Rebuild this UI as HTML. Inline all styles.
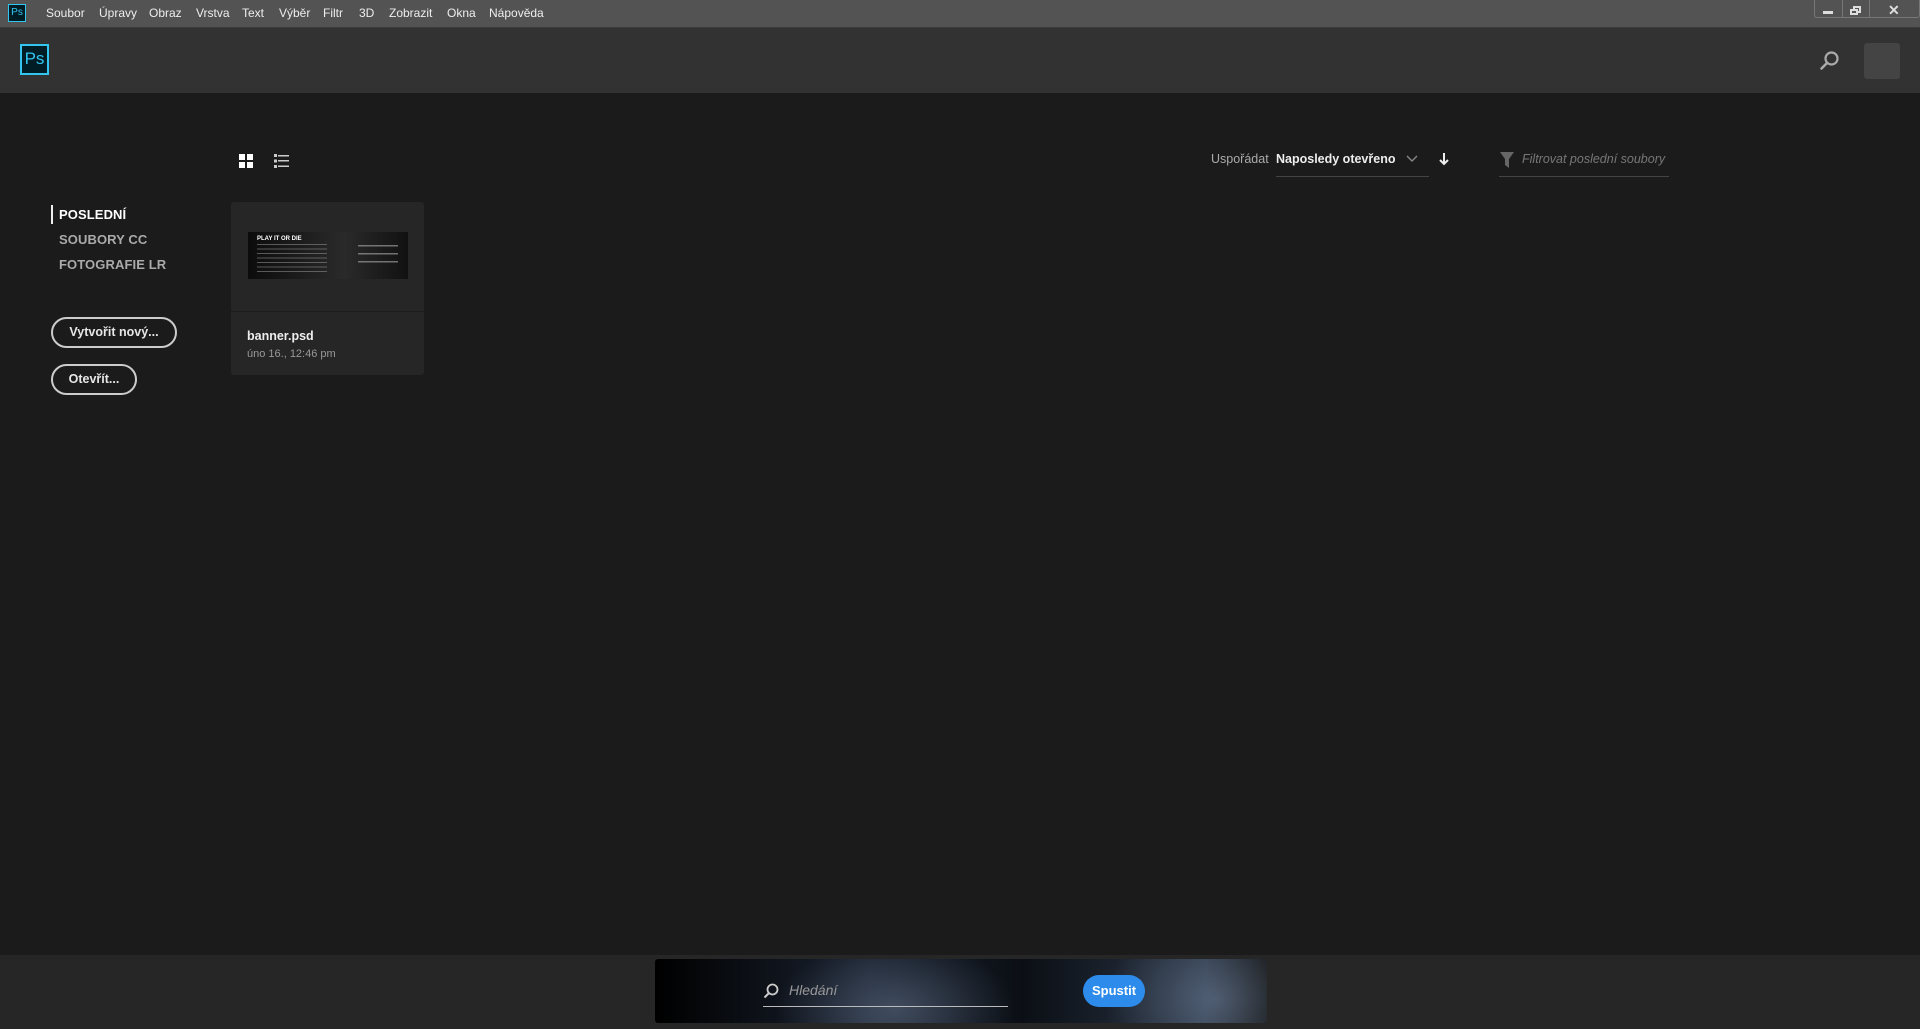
<!DOCTYPE html>
<html><head><meta charset="utf-8"><style>
*{margin:0;padding:0;box-sizing:border-box}
body{width:1920px;height:1029px;background:#1b1b1b;font-family:"Liberation Sans",sans-serif;position:relative;overflow:hidden;color:#ddd}
.abs{position:absolute}
#menu{left:0;top:0;width:1920px;height:28px;background:#535353;border-bottom:1px solid #3a3a3a}
#menu span{position:absolute;top:6px;font-size:12px;color:#eee}
#hdr{left:0;top:28px;width:1920px;height:65px;background:#323232}
.nav{font-size:13px;font-weight:bold;left:59px;letter-spacing:0.1px}
.btn{border:2px solid #ccc;border-radius:16px;color:#e6e6e6;font-weight:bold;font-size:12.5px;text-align:center;line-height:27px;height:31px}
</style></head><body>
<div id="menu" class="abs">
 <div class="abs" style="left:8px;top:4px;width:18px;height:18px;border:1.5px solid #31c5f0;background:#001d26;color:#31c5f0;font-size:10px;line-height:15px;text-align:center">Ps</div>
 <span style="left:46px">Soubor</span><span style="left:99px">Úpravy</span><span style="left:149px">Obraz</span><span style="left:196px">Vrstva</span><span style="left:242px">Text</span><span style="left:279px">Výběr</span><span style="left:323px">Filtr</span><span style="left:359px">3D</span><span style="left:389px">Zobrazit</span><span style="left:447px">Okna</span><span style="left:489px">Nápověda</span>
 <div class="abs" style="left:1814px;top:0;width:106px;height:18px;border:1px solid #777;border-top:none;border-radius:0 0 3px 3px"></div>
 <div class="abs" style="left:1842px;top:0;width:1px;height:18px;background:#777"></div>
 <div class="abs" style="left:1869px;top:0;width:1px;height:18px;background:#777"></div>
 <div class="abs" style="left:1823px;top:11px;width:10px;height:3px;background:#ddd"></div>
 <div class="abs" style="left:1853px;top:6px;width:8px;height:7px;border:2px solid #ddd"></div>
 <div class="abs" style="left:1850px;top:9px;width:8px;height:6px;border:2px solid #ddd;background:#535353"></div>
 <div class="abs" style="left:1888px;top:2px;font-size:14px;color:#ddd;font-weight:bold">✕</div>
</div>
<div id="hdr" class="abs">
 <div class="abs" style="left:20px;top:16px;width:29px;height:31px;border:2px solid #31c5f0;background:#001d26;color:#31c5f0;font-size:17px;line-height:26px;text-align:center">Ps</div>
 <svg class="abs" style="left:1818px;top:21px" width="24" height="24" viewBox="0 0 24 24"><circle cx="13.5" cy="9.5" r="6" fill="none" stroke="#aaa" stroke-width="2.2"/><line x1="9" y1="14" x2="3.5" y2="19.5" stroke="#aaa" stroke-width="2.6" stroke-linecap="round"/></svg>
 <div class="abs" style="left:1864px;top:15px;width:36px;height:36px;background:#444;border-radius:3px"></div>
</div>
<div class="abs" style="left:51px;top:205px;width:2px;height:19px;background:#eee"></div>
<div class="abs nav" style="top:207px;color:#fff">POSLEDNÍ</div>
<div class="abs nav" style="top:232px;color:#aaa">SOUBORY CC</div>
<div class="abs nav" style="top:257px;color:#aaa">FOTOGRAFIE LR</div>
<div class="abs btn" style="left:51px;top:317px;width:126px">Vytvořit nový...</div>
<div class="abs btn" style="left:51px;top:364px;width:86px">Otevřít...</div>
<svg class="abs" style="left:239px;top:154px" width="14" height="14"><rect x="0" y="0" width="6" height="6" fill="#fff"/><rect x="8" y="0" width="6" height="6" fill="#fff"/><rect x="0" y="8" width="6" height="6" fill="#fff"/><rect x="8" y="8" width="6" height="6" fill="#fff"/></svg>
<svg class="abs" style="left:274px;top:154px" width="15" height="14" fill="#ccc"><rect x="0" y="0" width="3" height="3"/><rect x="4" y="1" width="11" height="1.5"/><rect x="0" y="5.5" width="3" height="3"/><rect x="4" y="6" width="11" height="1.5"/><rect x="0" y="11" width="3" height="3"/><rect x="4" y="11.5" width="11" height="1.5"/></svg>
<div class="abs" style="left:231px;top:202px;width:193px;height:173px;background:#262626;border-radius:3px">
 <div class="abs" style="left:0;top:109px;width:193px;height:1px;background:#1d1d1d"></div>
 <div class="abs" style="left:17px;top:30px;width:160px;height:47px;background:linear-gradient(90deg,#0c0c0c,#2a2a2a 60%,#111);color:#fff">
  <div class="abs" style="left:9px;top:4px;font-size:6px;font-weight:bold">PLAY IT OR DIE</div>
  <div class="abs" style="left:9px;top:12px;width:70px;height:28px;background:repeating-linear-gradient(#888 0 1px,transparent 1px 4.5px);opacity:.6"></div>
  <div class="abs" style="left:110px;top:13px;width:40px;height:22px;background:repeating-linear-gradient(#999 0 1.5px,transparent 1.5px 8px);opacity:.7"></div>
 </div>
 <div class="abs" style="left:16px;top:127px;font-size:12.5px;font-weight:bold;color:#eee">banner.psd</div>
 <div class="abs" style="left:16px;top:146px;font-size:11px;color:#999">úno 16., 12:46 pm</div>
</div>
<div class="abs" style="left:1211px;top:152px;font-size:12.5px;color:#aaa">Uspořádat</div>
<div class="abs" style="left:1276px;top:152px;font-size:12.5px;color:#eee;font-weight:bold">Naposledy otevřeno</div>
<div class="abs" style="left:1276px;top:176px;width:153px;height:1px;background:#444"></div>
<svg class="abs" style="left:1406px;top:155px" width="12" height="8"><path d="M1 1l5 5 5-5" fill="none" stroke="#888" stroke-width="1.4"/></svg>
<svg class="abs" style="left:1438px;top:152px" width="12" height="14"><path d="M6 1v11M2 8l4 4 4-4" fill="none" stroke="#eee" stroke-width="2"/></svg>
<svg class="abs" style="left:1500px;top:152px" width="14" height="16"><path d="M0 0h14l-5 7v9l-4-3V7z" fill="#666"/></svg>
<div class="abs" style="left:1522px;top:152px;font-size:12.5px;color:#777;font-style:italic">Filtrovat poslední soubory</div>
<div class="abs" style="left:1499px;top:176px;width:170px;height:1px;background:#444"></div>
<div class="abs" style="left:0;top:955px;width:1920px;height:74px;background:#262626"></div>
<div class="abs" style="left:655px;top:959px;width:612px;height:64px;border-radius:3px;background:radial-gradient(ellipse 120px 70px at 240px 50px,rgba(140,160,190,.35),transparent),radial-gradient(ellipse 110px 80px at 560px 40px,rgba(140,160,190,.4),transparent),linear-gradient(90deg,#000 0%,#1a2230 35%,#0b0f15 60%,#2a3545 90%,#111)">
 <svg class="abs" style="left:108px;top:24px" width="16" height="16"><circle cx="9.5" cy="6.5" r="5" fill="none" stroke="#ccc" stroke-width="1.8"/><line x1="6" y1="10" x2="1.5" y2="14.5" stroke="#ccc" stroke-width="2"/></svg>
 <div class="abs" style="left:134px;top:23px;font-size:14px;color:#999;font-style:italic">Hledání</div>
 <div class="abs" style="left:108px;top:47px;width:245px;height:1px;background:#bbb"></div>
 <div class="abs" style="left:428px;top:16px;width:62px;height:32px;border-radius:16px;background:#2d8ceb;color:#fff;font-weight:bold;font-size:13px;text-align:center;line-height:32px">Spustit</div>
</div>
</body></html>
